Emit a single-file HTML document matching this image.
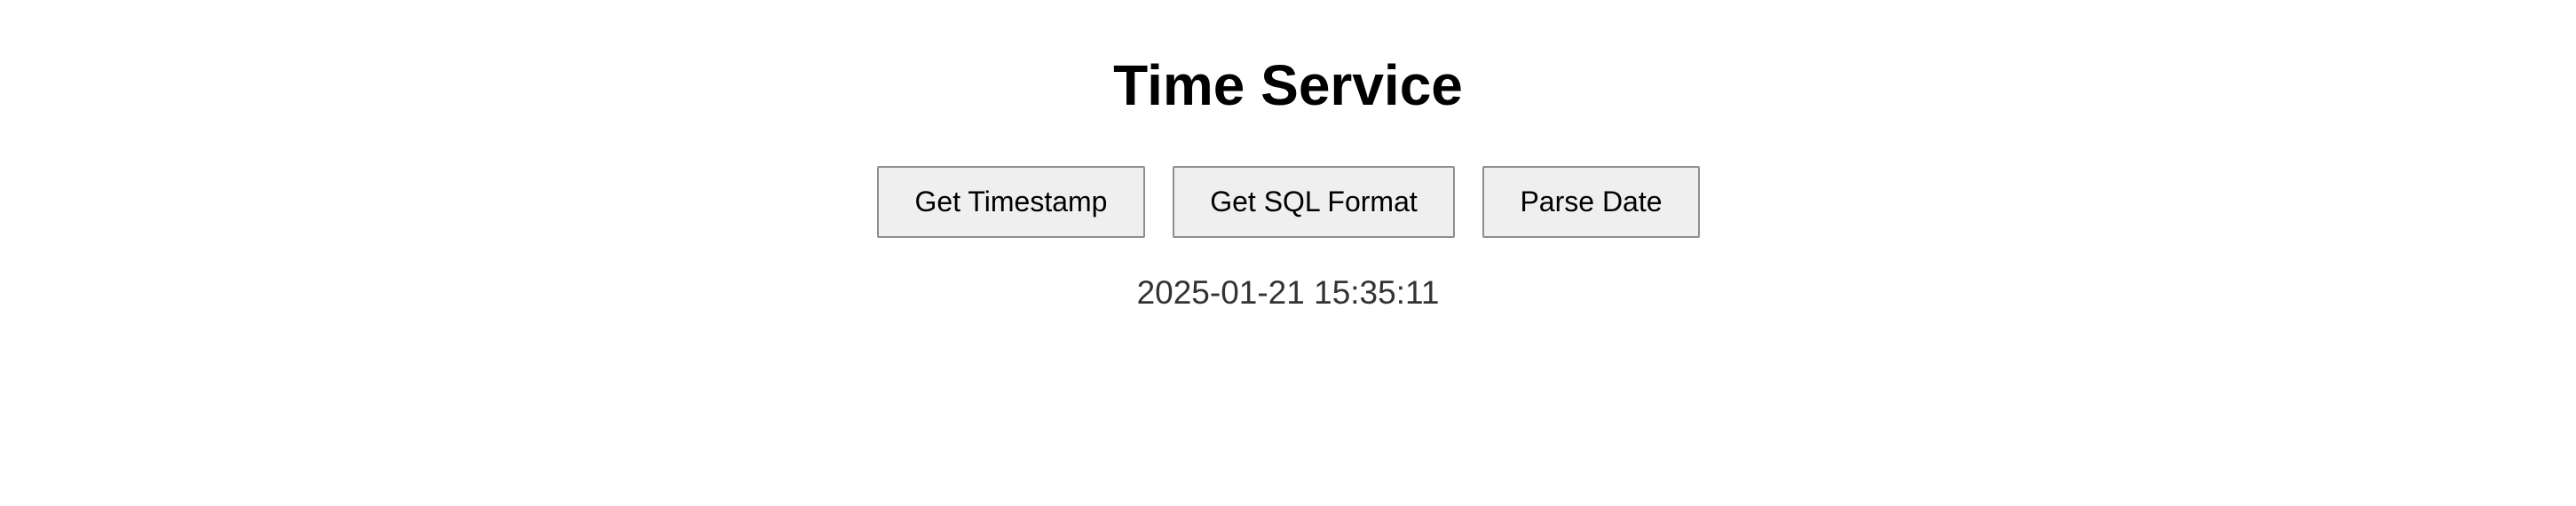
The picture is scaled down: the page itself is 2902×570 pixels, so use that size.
<!DOCTYPE html>
<html><head><meta charset="utf-8"><style>
html,body{margin:0;padding:0;width:2902px;height:570px;background:#fff;overflow:hidden;font-family:"Liberation Sans",Arial,sans-serif;}
.t{position:absolute;left:0;width:2902px;text-align:center;top:60px;font-size:64px;font-weight:bold;line-height:1.15;color:#000;margin:0}
.row{position:absolute;top:187px;left:988px;display:flex;gap:31px}
.row div{box-sizing:border-box;height:81px;border:2px solid #8f8f8f;border-radius:2px;background:#efefef;font-size:32px;color:#000;display:flex;align-items:center;justify-content:center}
.r{position:absolute;left:0;width:2902px;text-align:center;top:309px;font-size:37px;line-height:1.15;color:#333}
</style></head><body>
<h1 class="t">Time Service</h1>
<div class="row">
<div style="width:302px">Get Timestamp</div>
<div style="width:318px">Get SQL Format</div>
<div style="width:245px">Parse Date</div>
</div>
<div class="r">2025-01-21 15:35:11</div>
</body></html>
